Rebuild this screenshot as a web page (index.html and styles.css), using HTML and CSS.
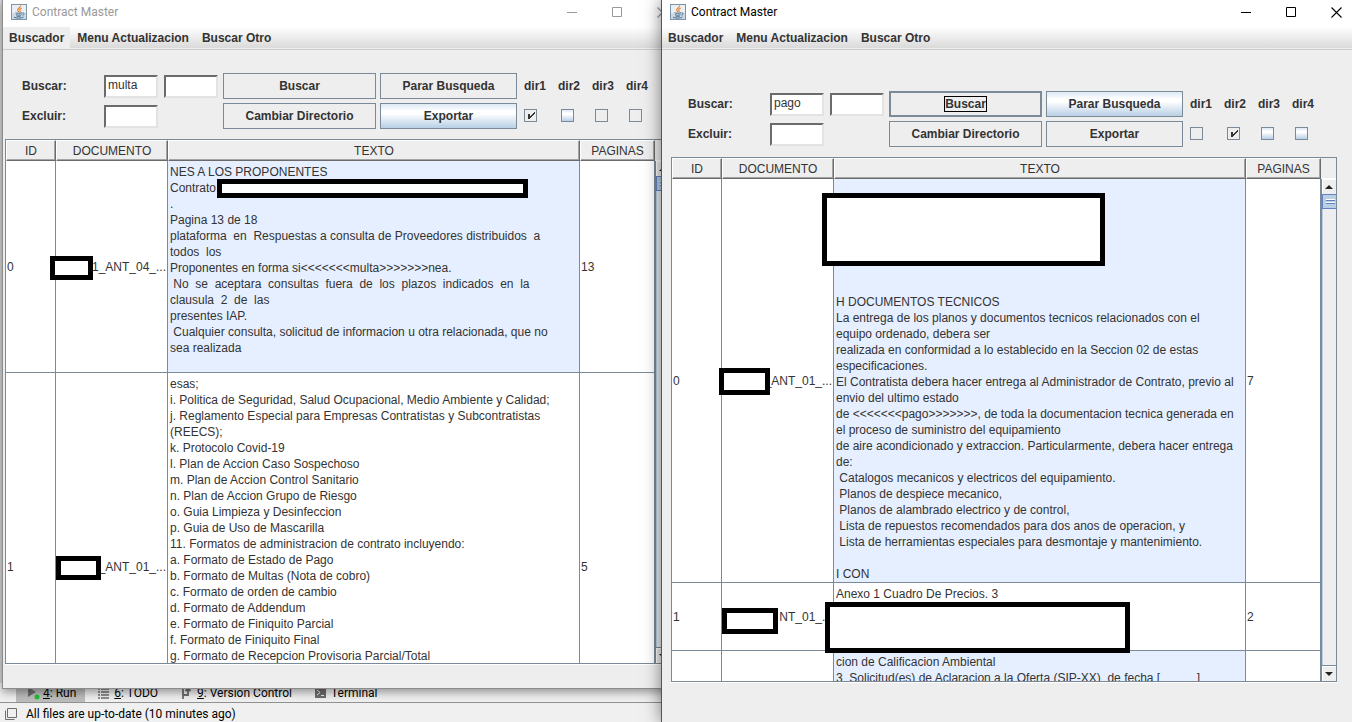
FILE: index.html
```html
<!DOCTYPE html>
<html lang="es">
<head>
<meta charset="utf-8">
<title>Contract Master</title>
<link rel="stylesheet" href="styles.css">
</head>
<body>
<svg class="defs" aria-hidden="true">
  <symbol id="java" viewBox="0 0 16 16">
    <rect x=".5" y=".5" width="15" height="15" fill="#e9eff4" stroke="#7d93a8"/>
    <path d="M1 9h14v6H1z" fill="#cddae5"/>
    <path d="M9.500 1.500c.8 2-3.300 3-2.800 4.700.2.800 1 1.200 1 2M10.800 4c-1.500.7-2.600 1.500-1.800 2.600.5.600.2 1.200-.3 1.700" fill="none" stroke="#e8842c" stroke-width="1.200"/>
    <path d="M4.500 8.700c1 .7 5.500.7 6.500 0M5 10.700c1.500.7 4 .7 5.500 0M5.500 12.200c1.200.5 3 .5 4.200 0M3 13.200c2 1.300 8 1.200 9.500-.2M11.300 9c2.300-.6 2.600 1.500.2 2.300" fill="none" stroke="#44708f"/>
  </symbol>
  <symbol id="min" viewBox="0 0 11 11"><path d="M0 5.500h10" stroke="currentColor"/></symbol>
  <symbol id="max" viewBox="0 0 11 11"><path d="M.5.500h9v9h-9z" fill="none" stroke="currentColor"/></symbol>
  <symbol id="close" viewBox="0 0 11 11"><path d="M.5.500l10 10M10.500.500l-10 10" stroke="currentColor" stroke-width="1.100"/></symbol>
</svg>

<div class="desktop">
  <footer class="ide">
    <nav class="tools">
      <button class="tool active"><svg width="13" height="14" viewBox="0 0 13 14"><path d="M1 1l8 5-8 5z" fill="#6e6e6e"/><circle cx="10" cy="11" r="2.500" fill="#1fc32b"/></svg><span><u>4</u>: Run</span></button>
      <button class="tool"><svg width="11" height="12" viewBox="0 0 11 12"><path d="M0 2h2M0 5h2M0 8h2M0 11h2M3 2h8M3 5h8M3 8h8M3 11h8" stroke="#6e6e6e" stroke-width="1.300"/></svg><span><u>6</u>: TODO</span></button>
      <button class="tool"><svg width="11" height="12" viewBox="0 0 11 12"><path d="M2 0v12M2 8h5V2M4.500 4L7 1.500 9.500 4" fill="none" stroke="#6e6e6e" stroke-width="1.800"/></svg><span><u>9</u>: Version Control</span></button>
      <button class="tool"><svg width="11" height="10" viewBox="0 0 11 10"><path d="M0 0h11v10H0z" fill="#6e6e6e"/><path d="M2 2l3 2.500L2 7M6 7.500h3" fill="none" stroke="#f0f0f0"/></svg><span>Terminal</span></button>
    </nav>
    <div class="status"><svg width="12" height="12" viewBox="0 0 12 12"><path d="M2.500.500h9v9h-9zM.5 2.500v9h9" fill="none" stroke="#6e6e6e"/></svg><span>All files are up-to-date (10 minutes ago)</span></div>
  </footer>

  <section class="window back">
    <header class="titlebar">
      <svg class="logo"><use href="#java"/></svg><h1>Contract Master</h1>
      <button aria-label="Minimizar"><svg><use href="#min"/></svg></button>
      <button aria-label="Maximizar"><svg><use href="#max"/></svg></button>
      <button aria-label="Cerrar"><svg><use href="#close"/></svg></button>
    </header>
    <nav class="menubar"><button class="selected">Buscador</button><button>Menu Actualizacion</button><button>Buscar Otro</button></nav>
    <main class="content">
      <form class="search">
        <label for="a-q">Buscar:</label><input type="text" id="a-q" value="multa"><input type="text" aria-label="Segundo termino">
        <button type="button">Buscar</button><button type="button" class="narrow">Parar Busqueda</button>
        <label for="a-1">dir1</label><label for="a-2">dir2</label><label for="a-3">dir3</label><label for="a-4">dir4</label>
        <label for="a-x">Excluir:</label><input type="text" id="a-x"><span></span>
        <button type="button">Cambiar Directorio</button><button type="button" class="narrow lit">Exportar</button>
        <input type="checkbox" id="a-1" class="first" checked><input type="checkbox" id="a-2" class="lit"><input type="checkbox" id="a-3"><input type="checkbox" id="a-4">
      </form>
      <div class="pane">
        <div class="viewport">
          <table>
            <colgroup><col class="c-id"><col class="c-doc"><col><col class="c-pag"></colgroup>
            <thead><tr><th>ID</th><th>DOCUMENTO</th><th>TEXTO</th><th>PAGINAS</th></tr></thead>
            <tbody>
              <tr class="row-m"><td>0</td><td class="doc">1_ANT_04_...<i class="mask m1"></i></td><td class="text">NES A LOS PROPONENTES
Contrato
.
Pagina 13 de 18
plataforma  en  Respuestas a consulta de Proveedores distribuidos  a
todos  los
Proponentes en forma si&lt;&lt;&lt;&lt;&lt;&lt;&lt;multa&gt;&gt;&gt;&gt;&gt;&gt;&gt;nea.
 No  se  aceptara  consultas  fuera  de  los  plazos  indicados  en  la
clausula  2  de  las
presentes IAP.
 Cualquier consulta, solicitud de informacion u otra relacionada, que no
sea realizada<i class="mask m2"></i></td><td>13</td></tr>
              <tr class="row-l"><td>1</td><td class="doc">_ANT_01_...<i class="mask m3"></i></td><td class="text">esas;
i. Politica de Seguridad, Salud Ocupacional, Medio Ambiente y Calidad;
j. Reglamento Especial para Empresas Contratistas y Subcontratistas
(REECS);
k. Protocolo Covid-19
l. Plan de Accion Caso Sospechoso
m. Plan de Accion Control Sanitario
n. Plan de Accion Grupo de Riesgo
o. Guia Limpieza y Desinfeccion
p. Guia de Uso de Mascarilla
11. Formatos de administracion de contrato incluyendo:
a. Formato de Estado de Pago
b. Formato de Multas (Nota de cobro)
c. Formato de orden de cambio
d. Formato de Addendum
e. Formato de Finiquito Parcial
f. Formato de Finiquito Final
g. Formato de Recepcion Provisoria Parcial/Total</td><td>5</td></tr>
            </tbody>
          </table>
        </div>
        <div class="side"><div class="corner"></div><button aria-label="Subir"><svg viewBox="0 0 8 4"><path d="M4 0l4 4H0z"/></svg></button><div class="track"><div class="thumb"></div></div><button aria-label="Bajar"><svg viewBox="0 0 8 4"><path d="M0 0h8L4 4z"/></svg></button></div>
      </div>
    </main>
  </section>

  <section class="window front">
    <header class="titlebar">
      <svg class="logo"><use href="#java"/></svg><h1>Contract Master</h1>
      <button aria-label="Minimizar"><svg><use href="#min"/></svg></button>
      <button aria-label="Maximizar"><svg><use href="#max"/></svg></button>
      <button aria-label="Cerrar"><svg><use href="#close"/></svg></button>
    </header>
    <nav class="menubar"><button>Buscador</button><button>Menu Actualizacion</button><button>Buscar Otro</button></nav>
    <main class="content">
      <form class="search">
        <label for="b-q">Buscar:</label><input type="text" id="b-q" value="pago"><input type="text" aria-label="Segundo termino">
        <button type="button" class="focused"><span>Buscar</span></button><button type="button" class="narrow lit">Parar Busqueda</button>
        <label for="b-1">dir1</label><label for="b-2">dir2</label><label for="b-3">dir3</label><label for="b-4">dir4</label>
        <label for="b-x">Excluir:</label><input type="text" id="b-x"><span></span>
        <button type="button">Cambiar Directorio</button><button type="button" class="narrow">Exportar</button>
        <input type="checkbox" id="b-1" class="first"><input type="checkbox" id="b-2" checked><input type="checkbox" id="b-3" class="lit"><input type="checkbox" id="b-4" class="lit">
      </form>
      <div class="pane">
        <div class="viewport">
          <table>
            <colgroup><col class="c-id"><col class="c-doc"><col><col class="c-pag"></colgroup>
            <thead><tr><th>ID</th><th>DOCUMENTO</th><th>TEXTO</th><th>PAGINAS</th></tr></thead>
            <tbody>
              <tr class="row-xl"><td>0</td><td class="doc">_ANT_01_...<i class="mask m4"></i></td><td class="text">





&nbsp;
H DOCUMENTOS TECNICOS
La entrega de los planos y documentos tecnicos relacionados con el
equipo ordenado, debera ser
realizada en conformidad a lo establecido en la Seccion 02 de estas
especificaciones.
El Contratista debera hacer entrega al Administrador de Contrato, previo al
envio del ultimo estado
de &lt;&lt;&lt;&lt;&lt;&lt;&lt;pago&gt;&gt;&gt;&gt;&gt;&gt;&gt;, de toda la documentacion tecnica generada en
el proceso de suministro del equipamiento
de aire acondicionado y extraccion. Particularmente, debera hacer entrega
de:
 Catalogos mecanicos y electricos del equipamiento.
 Planos de despiece mecanico,
 Planos de alambrado electrico y de control,
 Lista de repuestos recomendados para dos anos de operacion, y
 Lista de herramientas especiales para desmontaje y mantenimiento.

I CON<i class="mask m5"></i></td><td>7</td></tr>
              <tr class="row-s"><td>1</td><td class="doc">NT_01_...<i class="mask m6"></i></td><td class="text">Anexo 1 Cuadro De Precios. 3<i class="mask m7"></i></td><td>2</td></tr>
              <tr class="row-s"><td></td><td></td><td class="text">cion de Calificacion Ambiental
3  Solicitud(es) de Aclaracion a la Oferta (SIP-XX)  de fecha [           ]</td><td></td></tr>
            </tbody>
          </table>
        </div>
        <div class="side"><div class="corner"></div><button aria-label="Subir"><svg viewBox="0 0 8 4"><path d="M4 0l4 4H0z"/></svg></button><div class="track"><div class="thumb"></div></div><button aria-label="Bajar"><svg viewBox="0 0 8 4"><path d="M0 0h8L4 4z"/></svg></button></div>
      </div>
    </main>
  </section>
</div>
</body>
</html>
```
FILE: styles.css
```css
* { box-sizing: border-box; }

body {
  margin: 0;
  font: 12px/16px "Liberation Sans", Arial, sans-serif;
  color: #333;
}

button, input { font: inherit; color: inherit; margin: 0; padding: 0; border-radius: 0; }
button { border: 0; background: none; }

.defs { position: absolute; width: 0; height: 0; }

.desktop {
  position: relative;
  height: 100vh;
  overflow: hidden;
  display: flex;
  flex-direction: column;
  justify-content: flex-end;
  background: #d6d6d6;
}

/* IDE behind the windows */
.ide {
  background: #f0f0f0;
  color: #000;
  font: 12px/16px Roboto, "Open Sans", sans-serif;
}
.tools { display: flex; gap: 4px; height: 20px; padding-left: 16px; border-bottom: 1px solid #919191; }
.tool { display: flex; align-items: center; gap: 3px; padding: 1px 9px 0 11px; }
.tool svg { flex: none; }
.tool:not(.active) { gap: 5px; padding: 1px 10px 0 9px; }
.tool.active { background: #bdbdbd; }
.status { display: flex; align-items: center; gap: 9px; height: 19px; padding: 2px 0 0 5px; }

/* Windows */
.window {
  position: absolute;
  display: flex;
  flex-direction: column;
  background: #eee;
  border: 1px solid #8c8c8c;
  border-top: 0;
}
.back { top: 0; left: 2px; right: 673px; bottom: 33px; box-shadow: 0 3px 9px rgba(0, 0, 0, .4); }
.front { top: 0; left: 661px; right: 0; bottom: 0; border-width: 0 0 0 1px; border-color: #555; box-shadow: 0 0 16px rgba(0, 0, 0, .5); }

.titlebar { display: flex; align-items: center; height: 24px; padding-left: 8px; background: #fff; color: #000; }
.logo { width: 16px; height: 16px; margin-right: 5px; }
.titlebar h1 { flex: 1; margin: 0; font: 12px/16px Roboto, "Open Sans", sans-serif; }
.titlebar button { width: 31px; height: 20px; margin-left: 14px; }
.titlebar button svg { display: block; width: 11px; height: 11px; margin: auto; }
.back .titlebar { color: #999; }

.menubar {
  display: flex;
  gap: 1px;
  height: 26px;
  padding-top: 3px;
  border-bottom: 1px solid #ccc;
  background: linear-gradient(#fff 3px, #dadada 24px, #eee 24px);
}
.menubar button { padding: 0 6px; font-weight: bold; }
.menubar button.selected { background: #eee; }

.content { flex: 1; min-height: 0; display: flex; flex-direction: column; padding: 23px 7px 24px 2px; }
.front .content { padding: 41px 15px 40px 9px; }

/* Search form */
.search {
  display: grid;
  grid-template-columns: 82px 60px 59px 157px 144px repeat(4, 34px);
  grid-auto-rows: 26px;
  row-gap: 4px;
  align-items: center;
  padding: 0 0 10px 17px;
  font-weight: bold;
}
.search input[type="text"] {
  width: 54px;
  height: 23px;
  padding: 0 2px 2px;
  border: 2px solid;
  border-color: #6b6b6b #e3e3e3 #e3e3e3 #6b6b6b;
  background: #fff;
  font-weight: normal;
}
.search button { width: 153px; height: 26px; border: 1px solid #7a8a99; }
.search button.narrow { width: 137px; }
.search button.focused { border-width: 2px; }
.focused span { border: 1px solid #000; }
.search .lit { background: linear-gradient(#dde8f3, #fff 30%, #fff 40%, #b8cfe5); }
.search input[type="checkbox"] {
  appearance: none;
  width: 13px;
  height: 13px;
  margin: 0 0 2px 3px;
  border: 1px solid #7a8a99;
}
.search input[type="checkbox"].first { margin-left: 0; }
.search input:checked {
  background: conic-gradient(#333 0 0) 3px 4px / 2px 5px no-repeat, linear-gradient(135deg, transparent 44%, #333 44% 60%, transparent 60%) 3px 2px / 7px 7px no-repeat;
}

/* Results */
.pane { flex: 1; min-height: 0; display: flex; border: 1px solid #7a8a99; box-shadow: 0 1px #fff; }
.viewport { flex: 1; min-width: 0; overflow: hidden; background: #fff; }
table { width: 100%; table-layout: fixed; border-collapse: separate; border-spacing: 0; }
.c-id { width: 50px; }
.c-doc { width: 112px; }
.c-pag { width: 75px; }
th {
  height: 21px;
  padding: 0;
  border: 1px solid;
  border-color: #fff #6b6b6b #6b6b6b #fff;
  background: #eee;
  box-shadow: inset -1px -1px #a5a5a5;
  font-weight: normal;
}
td {
  position: relative;
  padding: 0 1px;
  border: solid #7a8a99;
  border-width: 0 1px 1px 0;
  white-space: pre;
}
td.doc { text-align: right; }
td.text { padding: 3px 2px 0; vertical-align: top; }
tbody tr:nth-child(odd) td.text { background: #e6efff; }
.row-s { height: 68px; }
.row-m { height: 212px; }
.row-l { height: 388px; }
.row-xl { height: 404px; }

/* Blanked-out regions drawn over the cells */
.mask { position: absolute; z-index: 1; border: 5px solid #000; background: #fff; }
.m1 { left: -6px; top: calc(50% - 11px); width: 43px; height: 24px; }
.m2 { left: 49px; top: 18px; width: 311px; height: 19px; }
.m3 { left: 0; top: calc(50% - 11px); width: 45px; height: 24px; }
.m4 { left: -3px; top: calc(50% - 13px); width: 51px; height: 27px; }
.m5 { left: -12px; top: 14px; width: 283px; height: 73px; }
.m6 { left: 0; top: calc(50% - 9px); width: 56px; height: 26px; }
.m7 { left: -9px; top: 19px; width: 305px; height: 51px; }

/* Scroll bar */
.side { display: flex; flex-direction: column; width: 15px; }
.corner { height: 21px; border-bottom: 1px solid #fff; }
.side button { display: flex; align-items: center; justify-content: center; height: 15px; border-left: 1px solid #7a8a99; box-shadow: inset 1px 1px #fff; }
.side button svg { width: 8px; height: 4px; fill: #222; }
.track { flex: 1; border: solid #7a8a99; border-width: 0 0 1px 1px; box-shadow: inset 1px 0 #b8cfe5; }
.thumb {
  height: 15px;
  border: 1px solid #6382bf;
  border-right: 0;
  background: repeating-linear-gradient(#fff 0 1px, #6382bf 1px 2px, transparent 2px 3px) 3px 4px / 9px 6px no-repeat, #b8cfe5;
}
```
